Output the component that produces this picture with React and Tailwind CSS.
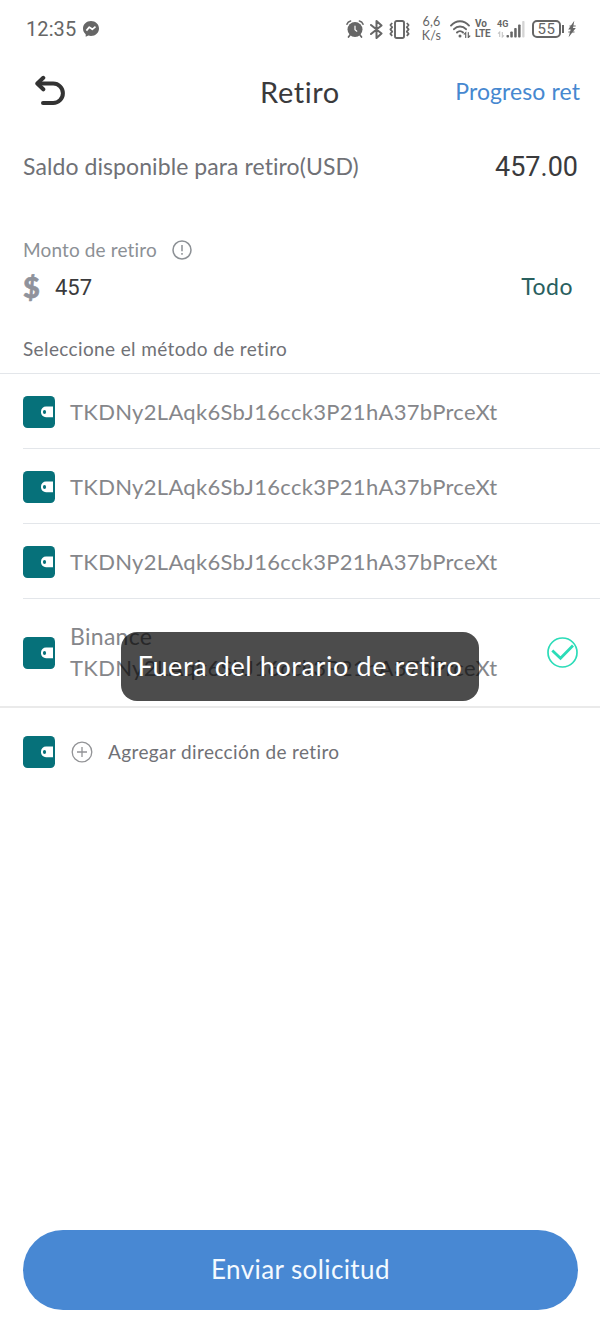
import React from 'react';

const ADDRESS = 'TKDNy2LAqk6SbJ16cck3P21hA37bPrceXt';

const WalletIcon = () => (
    <svg className="w-8 h-8 shrink-0" viewBox="0 0 32 32">
        <rect width="32" height="32" rx="4.5" fill="#06717a" />
        <path d="M30 10.500v10.800h-7a5 5 0 0 1-5-5v-.8a5 5 0 0 1 5-5z" fill="#fff" />
        <ellipse cx="21.500" cy="16" rx="1.600" ry="2" fill="#06717a" />
    </svg>
);

const BackIcon = () => (
    <svg className="w-8 h-8" viewBox="0 0 32 32" fill="none" stroke="#333" strokeWidth="4" strokeLinecap="round" strokeLinejoin="round">
        <path d="M5 8.500h15.200a9.700 9.700 0 0 1 0 19.400H10" />
        <path d="M10.300 2.800 4.300 8.500l6 5.800" />
    </svg>
);

const MessengerIcon = () => (
    <svg className="w-4 h-4" viewBox="0 0 16 16">
        <path d="M8 0C3.500 0 0 3.300 0 7.600c0 2.300 1 4.200 2.700 5.600v2.600l2.700-1.200c.8.2 1.700.4 2.600.4 4.500 0 8-3.200 8-7.500S12.500 0 8 0z" fill="#666" />
        <path d="m3.400 9.600 2.900-3.500 3 2.200 3.200-2.600" fill="none" stroke="#fff" strokeWidth="1.700" strokeLinejoin="round" />
    </svg>
);

const AlarmIcon = () => (
    <svg className="w-[18px] h-[18px]" viewBox="0 0 18 18" fill="none" stroke="#666" strokeLinecap="round">
        <circle cx="9" cy="9.500" r="7.500" fill="#666" stroke="none" />
        <path d="M.9 4.200C1.500 2.500 2.800 1.300 4.600.9M17.100 4.200c-.6-1.700-1.900-2.900-3.700-3.300" strokeWidth="1.500" />
        <path d="m4 15-1.500 2M14 15l1.500 2" strokeWidth="1.700" />
        <path d="M9 6.200v3.600l1.800 1.400" stroke="#fff" strokeWidth="1.200" />
    </svg>
);

const BluetoothIcon = () => (
    <svg className="w-[13px] h-[19px]" viewBox="0 0 13 19" fill="none" stroke="#666" strokeWidth="2" strokeLinejoin="round" strokeLinecap="round">
        <path d="m1 5 10.500 8.500-5 4.500V1l5 4.500L1 14" />
    </svg>
);

const VibrateIcon = () => (
    <svg className="w-[21px] h-[19px]" viewBox="0 0 21 19" fill="none" stroke="#666" strokeLinejoin="round">
        <rect x="6" y="1" width="9" height="17" rx="1.800" strokeWidth="1.900" />
        <path d="m3.200 3-1.800 2 1.800 2.200-1.800 2.200 1.800 2.200-1.800 2.200 1.800 2M17.800 3l1.800 2-1.800 2.200 1.800 2.200-1.800 2.200 1.800 2.200-1.800 2" strokeWidth="1.800" />
    </svg>
);

const WifiIcon = () => (
    <svg className="w-[21px] h-[18px]" viewBox="0 0 21 18" fill="none" stroke="#666" strokeWidth="1.900" strokeLinecap="round">
        <path d="M1 5.600C6-.2 14-.2 19 5.600M4 9.200c3.300-3.700 8.700-3.700 12 0M7 12.500c1.800-1.900 4.200-1.900 6 0" />
        <circle cx="10" cy="16" r="1.500" fill="#666" stroke="none" />
        <path d="M15.700 17.500v-4.800l-1.500 1.500M18.300 12.700v4.800l1.500-1.500" strokeWidth="1.200" />
    </svg>
);

const SignalIcon = () => (
    <svg className="w-[28px] h-[19px]" viewBox="0 0 28 19">
        <path d="M2.700 17v-5l-1.700 1.700M5.300 12v5L7 15.300" fill="none" stroke="#c4c4c4" strokeWidth="1.100" />
        <g fill="#666">
            <rect x="9.500" y="15" width="2.500" height="2.500" rx=".8" />
            <rect x="13.300" y="11.500" width="2.500" height="6" rx=".8" />
            <rect x="17.200" y="8" width="2.500" height="9.500" rx=".8" />
            <rect x="21.100" y="4.500" width="2.500" height="13" rx=".8" />
        </g>
        <rect x="25.200" y="1" width="2.300" height="16.500" rx=".8" fill="#d4d4d4" />
    </svg>
);

const BoltIcon = () => (
    <svg className="w-[8px] h-[18px]" viewBox="0 0 8 18">
        <path d="M6.300.8.2 9.400h2.500L.6 17.300l7.200-9.400H5z" fill="#666" />
        <path d="M.3 12h6.200M1.500 6h6.200" stroke="#666" strokeWidth="1.100" />
    </svg>
);

const StatusBar = () => (
    <div className="flex h-[58px] pl-[26px] pr-6 items-center justify-between text-[#666] font-['Roboto',sans-serif]">
        <div className="flex items-center gap-[7px]">
            <span className="text-[20px] leading-5 tracking-[0.1px]">12:35</span>
            <MessengerIcon />
        </div>
        <div className="flex items-center">
            <AlarmIcon />
            <span className="ml-[6px]"><BluetoothIcon /></span>
            <span className="ml-[6px]"><VibrateIcon /></span>
            <div className="ml-[11px] w-[21px] text-center text-[12.5px] leading-[14px] tracking-[0.2px] font-['Lato',sans-serif]">
                <p>6,6</p>
                <p>K/s</p>
            </div>
            <span className="ml-[8px]"><WifiIcon /></span>
            <div className="ml-[4px] w-[17px] text-[10px] leading-[10px] font-bold">
                <p>Vo</p>
                <p className="tracking-[-0.3px]">LTE</p>
            </div>
            <div className="relative ml-[5px]">
                <SignalIcon />
                <span className="absolute left-0 top-0 text-[9px] leading-[9px] font-bold">4G</span>
            </div>
            <div className="ml-[7px] w-[29px] h-[18px] rounded-[5px] border-2 border-[#666] flex items-center justify-center text-[15px] leading-none tracking-[0.5px]">55</div>
            <div className="ml-[1px] w-[2px] h-2 bg-[#666]" />
            <span className="ml-[4px]"><BoltIcon /></span>
        </div>
    </div>
);

const AddressRow = () => (
    <div className="ml-[23px] h-[75px] pt-[2px] flex items-center gap-[15px] border-b border-[#e3e6ea]">
        <WalletIcon />
        <span className="pb-[2px] text-[22px] tracking-[0.31px] text-[#85868a] whitespace-nowrap">{ADDRESS}</span>
    </div>
);

const App = () => {
    return (
        <div className="relative w-[600px] h-[1333px] overflow-hidden bg-white flex flex-col font-['Lato',sans-serif] [font-variant-ligatures:none]">
            <StatusBar />

            <header className="h-[68px] px-[20px] grid grid-cols-3 items-center whitespace-nowrap">
                <div className="pl-[13px] pb-[3px]"><BackIcon /></div>
                <h1 className="pb-px text-center text-[29px] tracking-[0.6px] text-[#3a3a3c]">Retiro</h1>
                <a className="pb-[2px] text-right text-[23px] tracking-[0.1px] text-[#4688d0]">Progreso ret</a>
            </header>

            <section className="h-[82px] pl-[23px] pr-[22px] flex items-center justify-between">
                <span className="pb-[2px] text-[23px] tracking-[0.08px] text-[#707176]">Saldo disponible para retiro(USD)</span>
                <span className="pt-px text-[27px] text-[#3a3a3c] font-['Roboto',sans-serif]">457.00</span>
            </section>

            <section className="h-[117px] pt-[29px] pl-[23px] pr-[27px]">
                <div className="h-[26px] flex items-center gap-[15px] text-[#8c9095]">
                    <span className="text-[19px] tracking-[0.14px]">Monto de retiro</span>
                    <svg className="w-5 h-5" viewBox="0 0 20 20" fill="none" stroke="currentColor" strokeWidth="1.500">
                        <circle cx="10" cy="10" r="9" />
                        <path d="M10 5v6.300M10 13v1.700" />
                    </svg>
                </div>
                <div className="h-12 flex items-center">
                    <span className="w-8 text-[29px] font-black text-[#8f929b] [-webkit-text-stroke:0.6px]">$</span>
                    <span className="flex-1 text-[22px] text-[#3a3a3c] font-['Roboto',sans-serif]">457</span>
                    <span className="pb-[2px] text-[23px] tracking-[0.5px] text-[#29605e]">Todo</span>
                </div>
            </section>

            <div className="h-[49px] pt-[1px] pl-[23px] flex items-center border-b border-[#e3e6ea]">
                <span className="text-[19px] tracking-[0.37px] text-[#707176]">Seleccione el método de retiro</span>
            </div>

            <AddressRow />
            <AddressRow />
            <AddressRow />

            <div className="h-[109px] pl-[23px] pr-[22px] flex items-center border-b-2 border-[#eaeaea]">
                <WalletIcon />
                <div className="ml-[15px] pb-[2px] flex-1 text-[22px] leading-[31px] text-[#85868a] whitespace-nowrap">
                    <p className="text-[23px] tracking-[0.3px]">Binance</p>
                    <p className="tracking-[0.31px]">{ADDRESS}</p>
                </div>
                <svg className="w-[31px] h-[31px]" viewBox="0 0 31 31" fill="none" stroke="#2bdcb8">
                    <circle cx="15.500" cy="15.500" r="14.500" strokeWidth="1.700" />
                    <path d="m5.300 13.500 8.200 7.800L26 8.500" strokeWidth="2.800" />
                </svg>
            </div>

            <div className="h-[88px] pl-[23px] flex items-center">
                <WalletIcon />
                <svg className="ml-4 w-[22px] h-[22px]" viewBox="0 0 22 22" fill="none" stroke="#929396" strokeWidth="1.300">
                    <circle cx="11" cy="11" r="9.800" />
                    <path d="M11 6v10M6 11h10" />
                </svg>
                <span className="ml-[15px] text-[19px] tracking-[0.38px] text-[#707176]">Agregar dirección de retiro</span>
            </div>

            <button className="mt-auto mb-[23px] mr-[22px] ml-[23px] pb-[2px] h-[80px] shrink-0 rounded-full bg-[#4888d3] text-[26px] tracking-[0.4px] text-[#f4faff]">
                Enviar solicitud
            </button>

            {/* Toast */}
            <div className="absolute left-[121px] top-[632px] w-[358px] h-[69px] rounded-2xl bg-black/70 flex items-center justify-center text-[27px] tracking-[0.6px] text-white whitespace-nowrap">
                Fuera del horario de retiro
            </div>
        </div>
    );
};

export default App;
